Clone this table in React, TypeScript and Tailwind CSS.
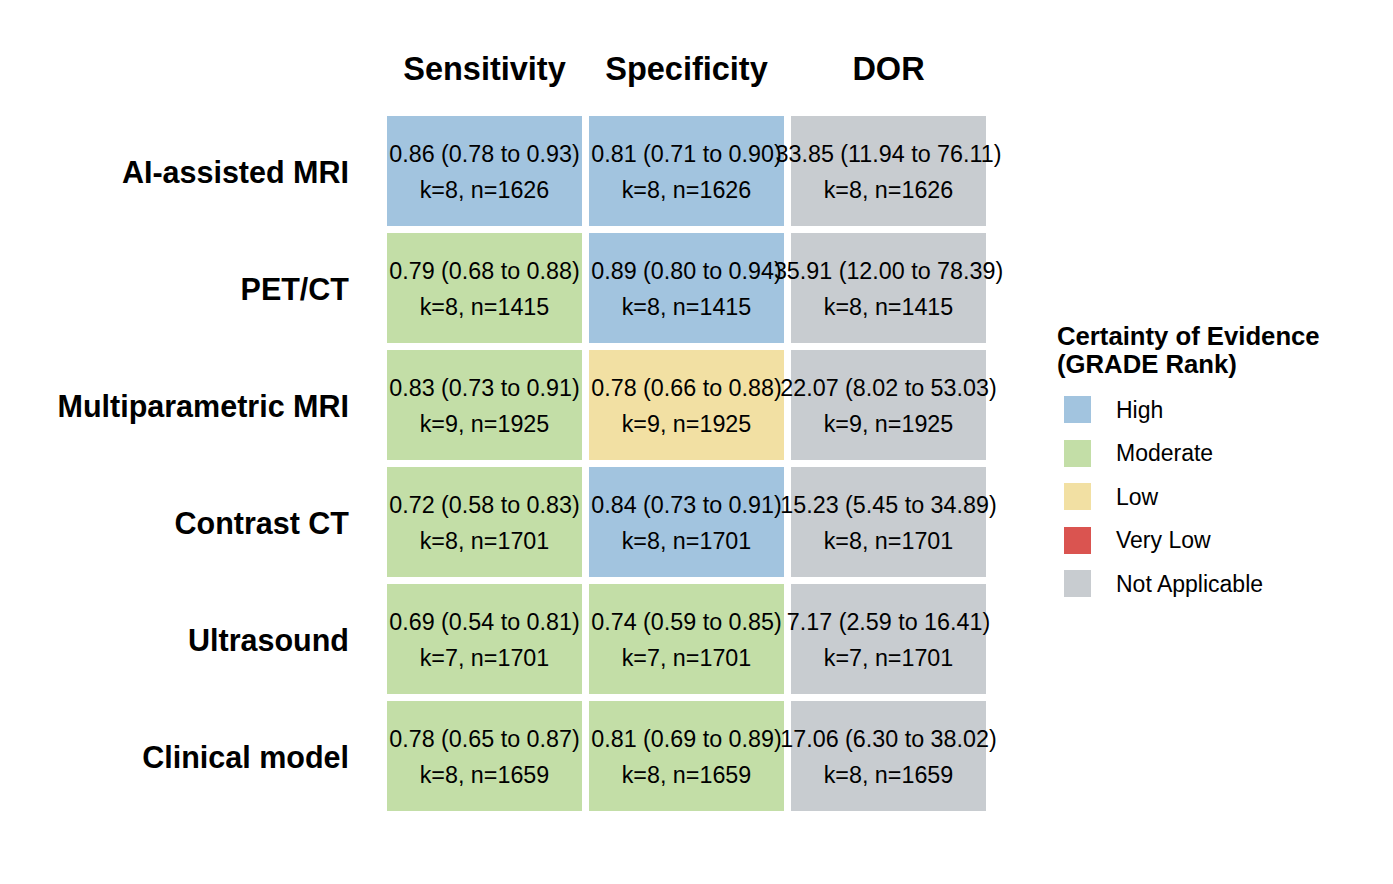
const colors = {
  high: 'bg-[#a2c4df]',
  moderate: 'bg-[#c3dea7]',
  low: 'bg-[#f2e0a3]',
  veryLow: 'bg-[#da5450]',
  na: 'bg-[#c8ccd0]',
};

type Grade = keyof typeof colors;

interface Cell {
  value: string;
  grade: Grade;
}

interface Row {
  label: string;
  n: string;
  cells: Cell[];
}

const rows: Row[] = [
  {
    label: 'AI-assisted MRI',
    n: 'k=8, n=1626',
    cells: [
      { value: '0.86 (0.78 to 0.93)', grade: 'high' },
      { value: '0.81 (0.71 to 0.90)', grade: 'high' },
      { value: '33.85 (11.94 to 76.11)', grade: 'na' },
    ],
  },
  {
    label: 'PET/CT',
    n: 'k=8, n=1415',
    cells: [
      { value: '0.79 (0.68 to 0.88)', grade: 'moderate' },
      { value: '0.89 (0.80 to 0.94)', grade: 'high' },
      { value: '35.91 (12.00 to 78.39)', grade: 'na' },
    ],
  },
  {
    label: 'Multiparametric MRI',
    n: 'k=9, n=1925',
    cells: [
      { value: '0.83 (0.73 to 0.91)', grade: 'moderate' },
      { value: '0.78 (0.66 to 0.88)', grade: 'low' },
      { value: '22.07 (8.02 to 53.03)', grade: 'na' },
    ],
  },
  {
    label: 'Contrast CT',
    n: 'k=8, n=1701',
    cells: [
      { value: '0.72 (0.58 to 0.83)', grade: 'moderate' },
      { value: '0.84 (0.73 to 0.91)', grade: 'high' },
      { value: '15.23 (5.45 to 34.89)', grade: 'na' },
    ],
  },
  {
    label: 'Ultrasound',
    n: 'k=7, n=1701',
    cells: [
      { value: '0.69 (0.54 to 0.81)', grade: 'moderate' },
      { value: '0.74 (0.59 to 0.85)', grade: 'moderate' },
      { value: '7.17 (2.59 to 16.41)', grade: 'na' },
    ],
  },
  {
    label: 'Clinical model',
    n: 'k=8, n=1659',
    cells: [
      { value: '0.78 (0.65 to 0.87)', grade: 'moderate' },
      { value: '0.81 (0.69 to 0.89)', grade: 'moderate' },
      { value: '17.06 (6.30 to 38.02)', grade: 'na' },
    ],
  },
];

const headers = ['Sensitivity', 'Specificity', 'DOR'];

const legend: { label: string; grade: Grade }[] = [
  { label: 'High', grade: 'high' },
  { label: 'Moderate', grade: 'moderate' },
  { label: 'Low', grade: 'low' },
  { label: 'Very Low', grade: 'veryLow' },
  { label: 'Not Applicable', grade: 'na' },
];

export default function App() {
  return (
    <div className="w-[1393px] h-[884px] bg-white text-black flex font-['Liberation_Sans',Arial,sans-serif]">
      {/* heatmap */}
      <div className="flex flex-col">
        <div className="flex h-[116px]">
          <div className="w-[387px]" />
          <div className="flex gap-[7px]">
            {headers.map((h) => (
              <div
                key={h}
                className="w-[195px] pt-[50px] text-center font-bold text-[32.5px] leading-[38px] whitespace-nowrap"
              >
                {h}
              </div>
            ))}
          </div>
        </div>

        <div className="flex flex-col gap-[7px]">
          {rows.map((row) => (
            <div key={row.label} className="flex h-[110px]">
              <div className="w-[349px] mr-[38px] flex items-center justify-end pt-[4px] font-bold text-[30.5px] whitespace-nowrap">
                {row.label}
              </div>
              <div className="flex gap-[7px]">
                {row.cells.map((cell, i) => (
                  <div
                    key={i}
                    className={`w-[195px] h-[110px] flex items-center justify-center pt-[2px] ${colors[cell.grade]}`}
                  >
                    <div className="relative flex flex-col items-center text-[23.3px] leading-[36px] whitespace-nowrap">
                      <span>{cell.value}</span>
                      <span>{row.n}</span>
                    </div>
                  </div>
                ))}
              </div>
            </div>
          ))}
        </div>
      </div>

      {/* legend */}
      <div className="ml-[71px] mt-[322px] flex flex-col">
        <div className="font-bold text-[25.7px] leading-[28px] whitespace-nowrap">
          Certainty of Evidence
          <br />
          (GRADE Rank)
        </div>
        <div className="mt-[10px] flex flex-col">
          {legend.map((item) => (
            <div key={item.label} className="h-[43.5px] flex items-center pl-[7px]">
              <div className={`w-[27px] h-[27px] ${colors[item.grade]}`} />
              <span className="ml-[25px] text-[23px] whitespace-nowrap">{item.label}</span>
            </div>
          ))}
        </div>
      </div>
    </div>
  );
}
